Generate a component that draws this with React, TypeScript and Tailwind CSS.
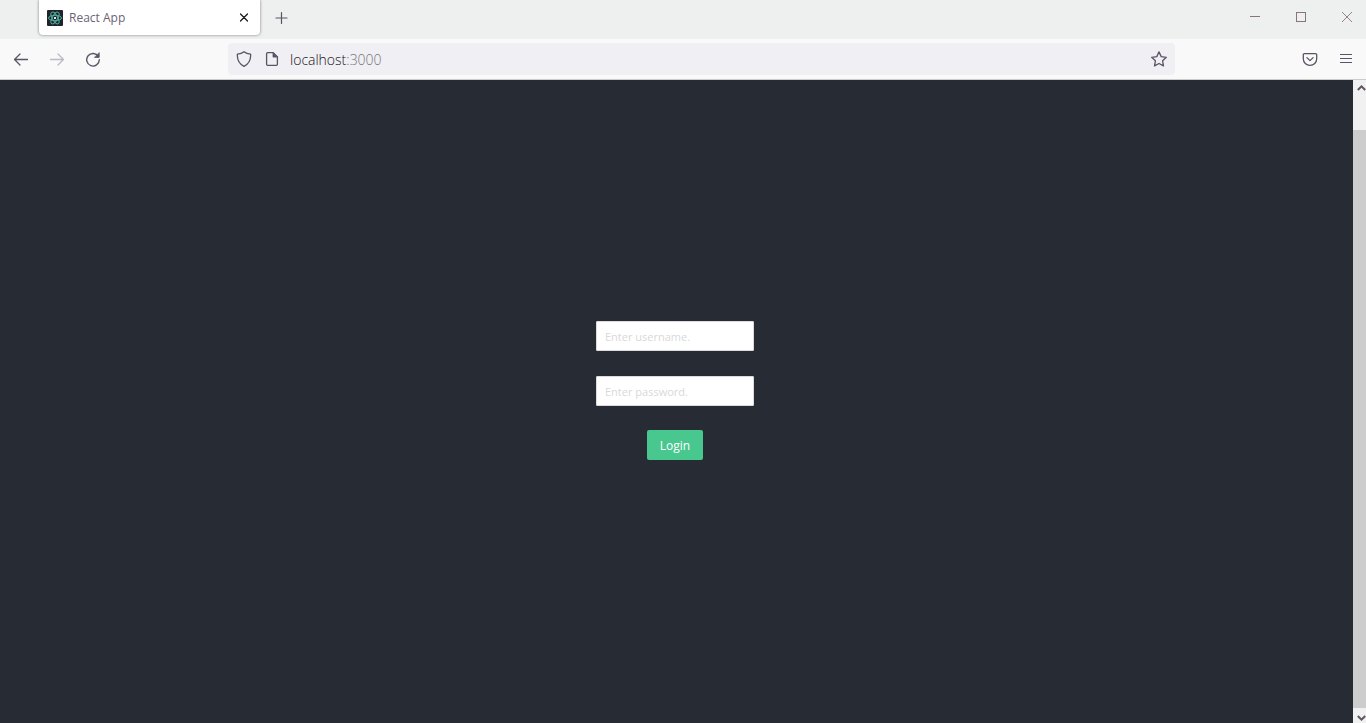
import React, { useState } from "react";

function ReactLogo() {
  return (
    <svg width="16" height="16" viewBox="0 0 16 16" fill="none" aria-hidden="true" className="shrink-0">
      <rect width="16" height="16" rx="1" fill="#20232a" />
      <g stroke="#4fb3a0" strokeWidth="1">
        <ellipse cx="8" cy="8" rx="6.5" ry="2.7" />
        <ellipse cx="8" cy="8" rx="6.5" ry="2.7" transform="rotate(60 8 8)" />
        <ellipse cx="8" cy="8" rx="6.5" ry="2.7" transform="rotate(120 8 8)" />
      </g>
      <rect x="7" y="7" width="2" height="2" fill="#d6f3f5" />
    </svg>
  );
}

function Icon({ children, className = "" }: { children: React.ReactNode; className?: string }) {
  return (
    <svg
      width="16"
      height="16"
      viewBox="0 0 16 16"
      fill="none"
      stroke="currentColor"
      strokeWidth="1.3"
      strokeLinecap="round"
      strokeLinejoin="round"
      aria-hidden="true"
      className={className}
    >
      {children}
    </svg>
  );
}

function TabStrip() {
  return (
    <div className="flex h-[39px] items-start justify-between bg-[#eef0ef] pl-[39px]">
      <div className="flex items-start">
        <div className="flex h-[35px] w-[221px] items-center rounded-b bg-white px-2 shadow-[0_0_3px_rgba(0,0,0,0.5)]">
          <ReactLogo />
          <span className="ml-1.5 flex-1 text-xs text-[#6b6375]">React App</span>
          <button type="button" aria-label="Close tab" className="text-[#15141a]">
            <Icon>
              <path d="M4.5 4l7 7M11.5 4l-7 7" strokeWidth="1.2" />
            </Icon>
          </button>
        </div>
        <button type="button" aria-label="New tab" className="ml-[13px] flex h-[35px] items-center text-[#5b5366]">
          <Icon>
            <path d="M8.5 2.5v11M3 8h11" strokeWidth="1.2" />
          </Icon>
        </button>
      </div>
      <div className="flex h-[34px] items-center text-[#88747f]">
        <button type="button" aria-label="Minimize" className="flex w-[46px] justify-center">
          <Icon>
            <path d="M3 7.5h10" strokeWidth="1" strokeLinecap="butt" />
          </Icon>
        </button>
        <button type="button" aria-label="Maximize" className="flex w-[46px] justify-center">
          <Icon>
            <rect x="3.5" y="3.5" width="9" height="9" strokeWidth="1" strokeLinejoin="miter" />
          </Icon>
        </button>
        <button type="button" aria-label="Close window" className="flex w-[42px] justify-end pr-[11px]">
          <Icon>
            <path d="M3 3l10 10M13 3L3 13" strokeWidth="0.9" strokeLinecap="butt" />
          </Icon>
        </button>
      </div>
    </div>
  );
}

function Toolbar() {
  return (
    <div className="flex h-[41px] items-center border-b border-[#cccccc] bg-[#f9f9f9] pr-3 pl-[13px] text-[#5b5366]">
      <div className="flex w-[215px] items-center gap-5">
        <button type="button" aria-label="Back">
          <Icon>
            <path d="M14.5 8.5H1.5M7 3L1.5 8.5L7 14" />
          </Icon>
        </button>
        <button type="button" aria-label="Forward" className="text-[#bcb9c1]">
          <Icon>
            <path d="M1.5 8.5H14.5M9 3l5.5 5.5L9 14" />
          </Icon>
        </button>
        <button type="button" aria-label="Reload">
          <Icon>
            <path d="M13.4 5.500A6.300 6.300 0 1 0 14.300 8.800" strokeWidth="1.4" />
            <path d="M14.200 2v4.400H9.800z" fill="currentColor" strokeWidth="0.8" />
          </Icon>
        </button>
      </div>
      <div className="flex h-8 max-w-[947px] flex-1 items-center rounded bg-[#f0eff4] px-2">
        <Icon>
          <path d="M8 .8C9.600 2.200 12 3 14.600 3.200C15 8.500 13 12.800 8 15.400C3 12.800 1 8.500 1.400 3.200C4 3 6.400 2.200 8 .8z" />
        </Icon>
        <Icon className="ml-3">
          <path d="M3.600 1.700h5.600l4.200 4.200v7.400a1 1 0 0 1-1 1H3.600a1 1 0 0 1-1-1V2.700a1 1 0 0 1 1-1z" />
          <path d="M9 1.700v4.400h4.400z" fill="currentColor" strokeWidth="0.8" />
        </Icon>
        <span className="ml-2.5 flex-1 pt-0.5 text-sm font-light text-[#15141a]">
          localhost<span className="text-[#75757a]">:3000</span>
        </span>
        <button type="button" aria-label="Bookmark this page">
          <Icon>
            <path d="M8 .9l2.200 4.700 5.100.7-3.700 3.500.9 5.100L8 12.500l-4.500 2.400.9-5.100L.7 6.300l5.100-.7z" />
          </Icon>
        </button>
      </div>
      <div className="ml-auto flex items-center gap-5">
        <button type="button" aria-label="Save to Pocket">
          <Icon>
            <path d="M2.500 2.600h11a1.200 1.200 0 0 1 1.200 1.200V7.700a6.700 6.700 0 0 1-13.400 0V3.800a1.200 1.200 0 0 1 1.200-1.200z" />
            <path d="M4.900 6.600L8 9.600l3.100-3" />
          </Icon>
        </button>
        <button type="button" aria-label="Open application menu">
          <Icon>
            <path d="M2 3.500h12M2 7.500h12M2 11.500h12" strokeWidth="1.2" strokeLinecap="butt" />
          </Icon>
        </button>
      </div>
    </div>
  );
}

function LoginForm() {
  const [username, setUsername] = useState("");
  const [password, setPassword] = useState("");
  const field =
    "h-[30px] w-[158px] rounded-[1px] border border-[#dbdbdb] bg-white px-2 text-[11px] text-[#363636] placeholder:text-[#d9d9d9]";
  return (
    <form className="flex flex-col items-center gap-6" onSubmit={(e) => e.preventDefault()}>
      <div className="flex flex-col gap-[25px]">
        <input
          type="text"
          aria-label="Username"
          placeholder="Enter username."
          value={username}
          onChange={(e) => setUsername(e.target.value)}
          className={field}
        />
        <input
          type="password"
          aria-label="Password"
          placeholder="Enter password."
          value={password}
          onChange={(e) => setPassword(e.target.value)}
          className={field}
        />
      </div>
      <button type="submit" className="h-[30px] w-14 rounded-xs bg-[#48c78e] pt-0.5 text-xs text-white">
        Login
      </button>
    </form>
  );
}

function ScrollBar() {
  return (
    <div className="flex w-[13px] flex-col items-end bg-[#f0f1f0] text-[#5f5660]" aria-hidden="true">
      <div className="flex h-[50px] items-start pt-1">
        <svg width="9" height="8" viewBox="0 0 9 8" fill="none" stroke="currentColor" strokeWidth="2">
          <path d="M.8 6L4.500 2.300 8.200 6" />
        </svg>
      </div>
      <div className="w-full flex-1 bg-[#cdcdcd]" />
      <div className="flex h-[15px] items-center pt-1">
        <svg width="9" height="8" viewBox="0 0 9 8" fill="none" stroke="currentColor" strokeWidth="2">
          <path d="M.8 2L4.500 5.700 8.200 2" />
        </svg>
      </div>
    </div>
  );
}

export default function App() {
  return (
    <div className="flex min-h-screen flex-col font-['Open_Sans','Noto_Sans',sans-serif]">
      <header>
        <TabStrip />
        <Toolbar />
      </header>
      <div className="flex flex-1">
        <main className="flex flex-1 items-center justify-center bg-[#272b34] pr-[3px] pb-[22px]">
          <LoginForm />
        </main>
        <ScrollBar />
      </div>
    </div>
  );
}
